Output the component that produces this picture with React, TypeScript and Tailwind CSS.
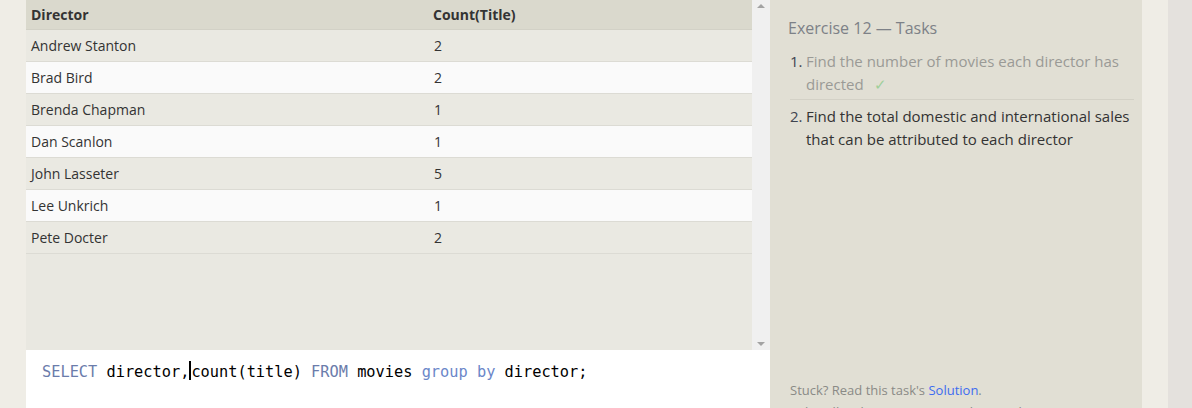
import React from 'react';

const rows = [
  { director: 'Andrew Stanton', count: 2 },
  { director: 'Brad Bird', count: 2 },
  { director: 'Brenda Chapman', count: 1 },
  { director: 'Dan Scanlon', count: 1 },
  { director: 'John Lasseter', count: 5 },
  { director: 'Lee Unkrich', count: 1 },
  { director: 'Pete Docter', count: 2 },
];

export default function App() {
  return (
    <div className="flex h-[408px] w-[1192px] overflow-hidden bg-[#efede6] text-[#333] font-['Open_Sans','Noto_Sans',sans-serif]">
      {/* left gutter */}
      <div className="w-[26px] shrink-0" />

      {/* results + editor */}
      <div className="flex w-[744px] shrink-0 flex-col">
        <div className="flex h-[350px] bg-[#e9e8e1]">
          <div className="flex-1">
            <div className="flex h-[30px] items-center border-b border-[#d2d1c6] bg-[#dad9cd] text-[14px] font-bold">
              <div className="w-[401px] pl-[5px]">Director</div>
              <div className="flex-1 pl-[6px]">Count(Title)</div>
            </div>
            {rows.map((r, i) => (
              <div
                key={r.director}
                className={`flex h-[32px] items-center border-b border-[#dcdbd4] text-[14px] ${i % 2 === 1 ? 'bg-[#fafafa]' : 'bg-[#eae9e2]'}`}
              >
                <div className="w-[401px] pl-[5px]">{r.director}</div>
                <div className="flex-1 pl-[7px]">{r.count}</div>
              </div>
            ))}
          </div>
          {/* scrollbar */}
          <div className="flex w-[18px] flex-col items-center justify-between bg-[#f0f0f0] py-[4px]">
            <div className="h-0 w-0 border-x-[4px] border-b-[4px] border-x-transparent border-b-[#a3a3a3]" />
            <div className="h-0 w-0 border-x-[4px] border-t-[4px] border-x-transparent border-t-[#a3a3a3]" />
          </div>
        </div>
        <div className="flex-1 bg-white pl-[16px] pt-[8px] font-['DejaVu_Sans_Mono','Liberation_Mono',monospace] text-[15.3px] text-black">
          <span className="text-[#6b7cab]">SELECT</span> director,
          <span className="inline-block h-[19px] w-[2px] translate-y-[3px] bg-black" />
          count(title) <span className="text-[#6b7cab]">FROM</span> movies{' '}
          <span className="text-[#6b87c9]">group</span> <span className="text-[#6b87c9]">by</span> director;
        </div>
      </div>

      {/* tasks panel */}
      <div className="flex w-[372px] shrink-0 flex-col bg-[#e1dfd4] pl-[18px] pr-[8px]">
        <div className="pt-[16px] text-[16px] text-[#7d8187]">Exercise 12 — Tasks</div>
        <ol className="mt-[10px] pl-[2px] text-[15px] leading-[23px]">
          <li className="flex border-b border-[#d3d1c6] pb-[3px]">
            <span className="w-[16px] shrink-0 text-[#3f4450]">1.</span>
            <span className="text-[#9a9a96]">
              Find the number of movies each director has directed
              <span className="ml-[10px] text-[#9fcf9a]">✓</span>
            </span>
          </li>
          <li className="flex pt-[5px]">
            <span className="w-[16px] shrink-0 text-[#3f4450]">2.</span>
            <span className="text-[#333]">Find the total domestic and international sales that can be attributed to each director</span>
          </li>
        </ol>
        <div className="flex-1" />
        <div className="pl-[2px] text-[13px] leading-[22px] text-[#8a8a86]">
          <div>
            Stuck? Read this task's <span className="text-[#3d6cf0]">Solution</span>.
          </div>
          <div className="-mb-[15px]">Solve all tasks to continue to the next lesson.</div>
        </div>
      </div>

      <div className="w-[26px] shrink-0 bg-[#efede6]" />
      <div className="flex-1 bg-[#e4e1dd]" />
    </div>
  );
}
